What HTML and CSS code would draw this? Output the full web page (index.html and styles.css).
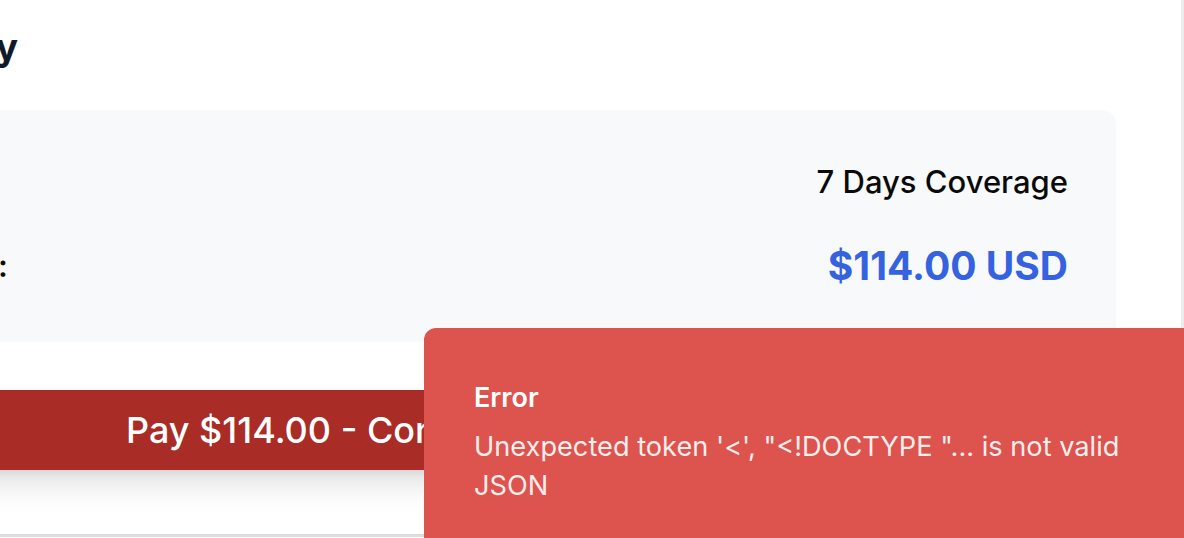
FILE: index.html
```html
<!DOCTYPE html>
<html lang="en">
<head>
<meta charset="utf-8">
<title>Payment</title>
<link rel="stylesheet" href="styles.css">
</head>
<body>
<div class="frame">
  <section class="card">
    <h2 class="heading">Payment Summary</h2>
    <div class="summary">
      <div class="row">
        <span class="label">Coverage Period:</span>
        <span class="value">7 Days Coverage</span>
      </div>
      <div class="row row-total">
        <span class="label label-total">Total Amount Due:</span>
        <span class="price">$114.00 USD</span>
      </div>
    </div>
    <button class="pay-btn" type="button">Pay $114.00 - Confirm Payment</button>
  </section>
  <div class="toast" role="alert">
    <div class="toast-title">Error</div>
    <div class="toast-desc">Unexpected token '&lt;', "&lt;!DOCTYPE "... is not valid JSON</div>
  </div>
</div>
</body>
</html>
```

FILE: styles.css
```css
html, body {
  margin: 0;
  padding: 0;
  background: #ffffff;
}

body {
  font-family: Inter, "Noto Sans", "Liberation Sans", sans-serif;
  overflow: hidden;
}

.frame {
  position: relative;
  width: 1184px;
  height: 538px;
  overflow: hidden;
}

.card {
  box-sizing: border-box;
  width: 1556px;
  height: 537px;
  margin-left: -372px;
  padding: 19px 65px 0 48px;
  background: #ffffff;
  border-right: 3px solid #ececef;
  border-bottom: 3px solid #dcdde2;
}

.heading {
  margin: 0 0 35px 0;
  font-size: 37px;
  line-height: 56px;
  font-weight: 700;
  color: #111827;
}

.summary {
  background: #f8f9fb;
  border-radius: 14px;
  padding: 48px;
  display: flex;
  flex-direction: column;
  gap: 32px;
}

.row {
  display: flex;
  justify-content: space-between;
  align-items: center;
  font-size: 31px;
  line-height: 48px;
  color: #0a0a0a;
}

.label {
  font-weight: 600;
}

.label-total {
  box-sizing: border-box;
  width: 284px;
  text-align: right;
  white-space: nowrap;
}

.value {
  font-weight: 500;
}

.row-total {
  line-height: 56px;
}

.price {
  font-size: 39px;
  font-weight: 700;
  color: #3563e0;
}

.pay-btn {
  display: block;
  width: 100%;
  margin-top: 48px;
  padding: 12px 0;
  border: none;
  border-radius: 12px;
  background: #a92c26;
  color: #ffffff;
  font-family: inherit;
  font-size: 36px;
  line-height: 56px;
  font-weight: 500;
  box-shadow: 0 20px 30px -6px rgba(0, 0, 0, 0.12), 0 8px 12px -8px rgba(0, 0, 0, 0.12);
}

.toast {
  position: absolute;
  left: 424px;
  top: 328px;
  box-sizing: border-box;
  width: 800px;
  height: 260px;
  padding: 50px 60px 0 50px;
  background: #dd534e;
  border-radius: 12px 0 0 0;
  color: #ffffff;
  display: flex;
  flex-direction: column;
  gap: 10px;
}

.toast-title {
  font-size: 27px;
  line-height: 39px;
  font-weight: 600;
}

.toast-desc {
  font-size: 27.2px;
  line-height: 39px;
  font-weight: 400;
  opacity: 0.9;
  max-width: 680px;
}
```
